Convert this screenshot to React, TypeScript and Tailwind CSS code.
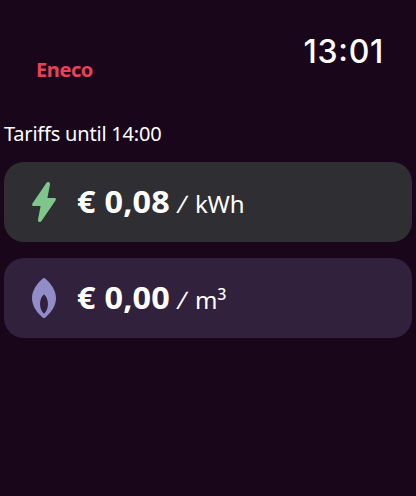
import type { ReactNode } from 'react'
import clsx from 'clsx'

interface TariffCardProps {
  icon: ReactNode
  price: string
  unit: ReactNode
  className: string
}

function BoltIcon() {
  return (
    <svg width="24" height="40" viewBox="0 0 24 40" fill="#7fc68c">
      <path d="M14.5 0.8 0.6 21.2C-.5 23 .3 24.1 1.8 24.1H8.6L6 37.4C5.6 40 8.2 40.8 9.5 39.1L23.5 18.6C24.5 17 23.7 15.9 22.2 15.9H15.4L18 2.4C18.3 0 15.8-.8 14.5.8Z" />
    </svg>
  )
}

function FlameIcon() {
  return (
    <svg width="24" height="40" viewBox="0 0 24 40" fill="#918dc9">
      <path
        fillRule="evenodd"
        d="M10.8.6C11.6-.1 12.4-.1 13.2.6C19 5.6 24 12.6 24 20.2C24 27.8 19 34.6 13.4 39.4C12.4 40.2 11.6 40.2 10.6 39.4C5 34.6 0 27.8 0 20.2C0 12.6 5 5.6 10.8.6ZM12 16.3C9.8 18.4 8 21.8 8 26C8 30.2 9.8 33.8 12 35.8C14.2 33.8 16 30.2 16 26C16 21.8 14.2 18.4 12 16.3Z"
      />
    </svg>
  )
}

function TariffCard({ icon, price, unit, className }: TariffCardProps) {
  return (
    <div className={clsx('flex h-20 items-center rounded-[20px] pl-7', className)}>
      {icon}
      <div className="ml-[21px] mt-1 flex items-baseline whitespace-nowrap leading-10">
        <span className="w-[101px]">
          <span className="inline-block origin-left scale-x-[1.08] text-[30px] font-bold tracking-[0.2px]">{price}</span>
        </span>
        <span className="w-[17px] text-2xl">
          <span className="inline-block -skew-x-12">/</span>
        </span>
        <span className="text-2xl tracking-[-0.2px]">{unit}</span>
      </div>
    </div>
  )
}

export default function App() {
  return (
    <main className="h-[496px] w-[416px] overflow-hidden bg-[#19061b] px-1 font-['Noto_Sans',sans-serif] text-white">
      <header className="flex h-[120px] justify-between pl-8 pr-7">
        <h1 className="mt-14 text-xl font-bold leading-7 tracking-[-0.4px] text-[#e94256]">Eneco</h1>
        <time className="mt-8 font-['Inter',sans-serif] text-[32px] font-medium leading-10 tracking-[0.7px]">
          13<span className="relative -top-0.5">:</span>01
        </time>
      </header>
      <p className="h-[42px] whitespace-nowrap text-xl leading-7 tracking-[-0.2px]">Tariffs until 14:00</p>
      <section className="flex flex-col gap-4">
        <TariffCard icon={<BoltIcon />} price="€ 0,08" unit="kWh" className="bg-[#2f2e33]" />
        <TariffCard
          icon={<FlameIcon />}
          price="€ 0,00"
          unit={
            <>
              m<sup className="top-[-9px] text-base font-medium leading-none">3</sup>
            </>
          }
          className="bg-[#31213d]"
        />
      </section>
    </main>
  )
}
